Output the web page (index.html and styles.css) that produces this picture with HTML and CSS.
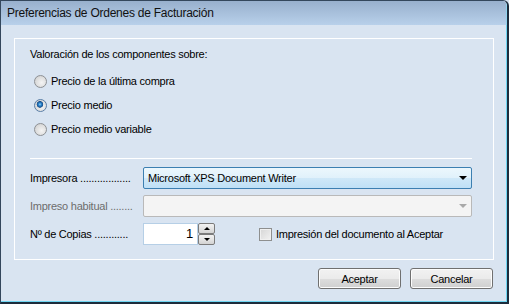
FILE: index.html
```html
<!DOCTYPE html>
<html lang="es">
<head>
<meta charset="utf-8">
<title>Preferencias de Ordenes de Facturación</title>
<link rel="stylesheet" href="styles.css">
</head>
<body>
<div class="window">
  <div class="titlebar">Preferencias de Ordenes de Facturación</div>
  <div class="client">
    <div class="group">
      <div class="heading">Valoración de los componentes sobre:</div>
      <div class="radios">
        <label class="radio"><span class="rb"></span>Precio de la última compra</label>
        <label class="radio"><span class="rb checked"></span>Precio medio</label>
        <label class="radio"><span class="rb"></span>Precio medio variable</label>
      </div>
      <div class="sep"></div>
      <div class="form">
        <div class="lbl">Impresora ..................</div>
        <div class="combo active"><span class="ctext">Microsoft XPS Document Writer</span><span class="arrow"></span></div>
        <div class="lbl disabled">Impreso habitual ........</div>
        <div class="combo disabled-combo"><span class="ctext"></span><span class="arrow grey"></span></div>
        <div class="lbl">Nº de Copias ............</div>
        <div class="copies-row">
          <div class="spin">
            <div class="num">1</div>
            <div class="spin-btns">
              <div class="sb up"><span class="tri-up"></span></div>
              <div class="sb down"><span class="tri-down"></span></div>
            </div>
          </div>
          <label class="check"><span class="cb"></span>Impresión del documento al Aceptar</label>
        </div>
      </div>
    </div>
    <div class="buttons">
      <button class="btn">Aceptar</button>
      <button class="btn">Cancelar</button>
    </div>
  </div>
</div>
</body>
</html>
```
FILE: styles.css
```css
html, body {
  margin: 0;
  padding: 0;
  background: #d9e4f1;
}
body {
  font-family: "Liberation Sans", Arial, sans-serif;
  font-size: 11px;
  letter-spacing: -0.25px;
  color: #000;
}
.window {
  width: 509px;
  height: 304px;
  box-sizing: border-box;
  border: 1px solid #34475c;
  border-right: 2px solid #1d2c3c;
  border-bottom: 2px solid #1d2c3c;
  border-top-right-radius: 6px;
  display: flex;
  flex-direction: column;
  overflow: hidden;
  background: #d9e4f1;
}
.titlebar {
  height: 24px;
  flex: none;
  box-sizing: border-box;
  padding-left: 6px;
  line-height: 24px;
  font-size: 12px;
  letter-spacing: -0.25px;
  color: #111;
  background: linear-gradient(#98b0cd, #b8d0ea);
  border-right: 1px solid #8fd3ee;
}
.client {
  flex: 1;
  display: flex;
  flex-direction: column;
  padding: 13px 12px 0 13px;
  border-right: 1px solid #6fd6f2;
  border-bottom: 1px solid #6fd6f2;
}
.group {
  height: 222px;
  box-sizing: border-box;
  border: 1px solid #fff;
  padding: 9px 0 0 15px;
}
.heading {
  height: 13px;
  line-height: 13px;
}
.radios {
  margin-top: 14px;
  display: flex;
  flex-direction: column;
  gap: 11px;
}
.radio {
  display: flex;
  align-items: center;
  height: 13px;
  line-height: 13px;
  padding-left: 4px;
}
.rb {
  width: 11px;
  height: 11px;
  border: 1px solid #8d9094;
  border-radius: 50%;
  margin-right: 4px;
  background: radial-gradient(circle at 60% 60%, #f4f4f4 0, #dcdcdc 60%, #c8c8c8 100%);
  flex: none;
}
.rb.checked {
  border-color: #5a7ea6;
  background:
    radial-gradient(circle at 45% 40%, #8fd0ff 0, #2a83c9 1.5px, #1a4f8a 3px, transparent 3.6px),
    radial-gradient(circle at 60% 60%, #f4f4f4 0, #dcdcdc 60%, #c8c8c8 100%);
}
.sep {
  margin-top: 22px;
  width: 442px;
  height: 1px;
  background: #fff;
}
.form {
  margin-top: 8px;
  display: grid;
  grid-template-columns: 113px 329px;
  grid-auto-rows: 22px;
  row-gap: 6px;
  align-items: center;
}
.lbl {
  line-height: 13px;
}
.lbl.disabled {
  color: #6d6d6d;
}
.combo {
  height: 22px;
  box-sizing: border-box;
  display: flex;
  align-items: center;
  justify-content: space-between;
  padding: 0 3px 0 4px;
  border-radius: 2px;
}
.combo.active {
  border: 1px solid #3c7fb1;
  background: linear-gradient(#ecf7fd 0, #e0f1fb 50%, #cfe8f8 51%, #bfe0f6 100%);
}
.combo.disabled-combo {
  border: 1px solid #b9b9b9;
  background: #f4f4f4;
}
.arrow {
  width: 0;
  height: 0;
  border-left: 4px solid transparent;
  border-right: 4px solid transparent;
  border-top: 4px solid #000;
  margin-right: 1px;
}
.arrow.grey {
  border-top-color: #a9a9a9;
}
.copies-row {
  display: flex;
  align-items: center;
  height: 22px;
}
.spin {
  display: flex;
  height: 22px;
}
.num {
  width: 55px;
  height: 22px;
  box-sizing: border-box;
  border: 1px solid #b6cfe6;
  background: #fff;
  text-align: right;
  padding-right: 4px;
  font-size: 13px;
  line-height: 20px;
}
.spin-btns {
  display: flex;
  flex-direction: column;
  width: 17px;
}
.sb {
  height: 11px;
  box-sizing: border-box;
  border: 1px solid #7b7b7b;
  border-radius: 2px;
  background: linear-gradient(#f2f2f2, #e4e4e4 50%, #d3d3d3);
  display: flex;
  align-items: center;
  justify-content: center;
}
.tri-up {
  width: 0;
  height: 0;
  border-left: 3px solid transparent;
  border-right: 3px solid transparent;
  border-bottom: 3px solid #000;
}
.tri-down {
  width: 0;
  height: 0;
  border-left: 3px solid transparent;
  border-right: 3px solid transparent;
  border-top: 3px solid #000;
}
.check {
  display: flex;
  align-items: center;
  margin-left: 44px;
  line-height: 13px;
}
.cb {
  width: 11px;
  height: 11px;
  border: 1px solid #8e8f8f;
  background: linear-gradient(135deg, #d6d6d6, #f2f2f2);
  box-shadow: inset 0 0 0 1px #f0f0f0;
  margin-right: 4px;
  flex: none;
}
.buttons {
  display: flex;
  justify-content: flex-end;
  gap: 9px;
  margin-top: 8px;
  padding-right: 1px;
}
.btn {
  width: 83px;
  height: 21px;
  box-sizing: border-box;
  border: 1px solid #707070;
  border-radius: 3px;
  background: linear-gradient(#f2f2f2 0, #ebebeb 50%, #dddddd 51%, #cfcfcf 100%);
  box-shadow: inset 0 0 0 1px #fcfcfc;
  font-family: "Liberation Sans", Arial, sans-serif;
  font-size: 11px;
  letter-spacing: -0.25px;
  color: #000;
  padding: 0;
}
```
